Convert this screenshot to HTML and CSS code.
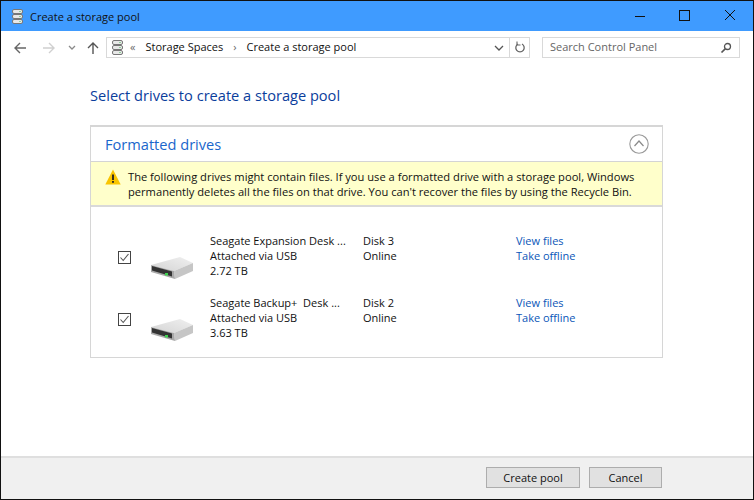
FILE: index.html
```html
<!DOCTYPE html>
<html>
<head>
    <title>Create a storage pool</title>
    <link rel="stylesheet" href="styles.css">
</head>
<body>
    <svg class="defs" width="0" height="0">
        <symbol id="pool" viewBox="0 0 11 15">
            <rect x="0.5" y="0.5" width="10" height="4" rx="1.5" fill="#e8e8e8" stroke="#777"/>
            <rect x="0.5" y="5.5" width="10" height="4" rx="1.5" fill="#e8e8e8" stroke="#777"/>
            <rect x="0.5" y="10.5" width="10" height="4" rx="1.5" fill="#e8e8e8" stroke="#777"/>
            <rect x="7" y="2" width="2" height="1" fill="#8fd49a"/>
            <rect x="7" y="7" width="2" height="1" fill="#8fd49a"/>
            <rect x="7" y="12" width="2" height="1" fill="#8fd49a"/>
        </symbol>
        <symbol id="drive" viewBox="0 0 44 24">
            <defs>
                <linearGradient id="driveTop" x1="0" y1="1" x2="1" y2="0">
                    <stop offset="0" stop-color="#d4d4d4"/>
                    <stop offset="1" stop-color="#f0f0f0"/>
                </linearGradient>
            </defs>
            <path d="M1 9 L30 1 L43 7 L24 15 Z" fill="url(#driveTop)"/>
            <path d="M24 15 L43 7 V15 L25 23 Z" fill="#c6c6c6"/>
            <path d="M1 9 L24 15 L25 23 L1 16 Z" fill="#a8a8a8"/>
            <path d="M2 10 L22 15.5 V20.5 L2 14.5 Z" fill="#333"/>
            <rect x="15" y="17" width="3" height="2.5" fill="#3ed24f"/>
        </symbol>
        <symbol id="check" viewBox="0 0 13 13">
            <rect x="0.5" y="0.5" width="12" height="12" fill="#fff" stroke="#444"/>
            <path d="M2.5 6.5 L5.2 9.5 L10.5 3" fill="none" stroke="#555" stroke-width="1.1"/>
        </symbol>
    </svg>
    <div class="window">
        <div class="titlebar">
            <svg class="title-icon"><use href="#pool"/></svg>
            <span class="title-text">Create a storage pool</span>
            <div class="caption">
                <svg class="cap-btn" viewBox="0 0 46 16"><path d="M20 8.5 H30" stroke="#111" stroke-width="1"/></svg>
                <svg class="cap-btn" viewBox="0 0 46 16"><rect x="18.5" y="2.5" width="10" height="10" fill="none" stroke="#111"/></svg>
                <svg class="cap-btn" viewBox="0 0 46 16"><path d="M18 2 L28 12 M28 2 L18 12" stroke="#111" stroke-width="1"/></svg>
            </div>
        </div>
        <div class="toolbar">
            <svg class="nav nav-back" viewBox="0 0 14 14"><path d="M13 7 H2 M7 2 L2 7 L7 12" fill="none" stroke="#666" stroke-width="1.4"/></svg>
            <svg class="nav nav-fwd" viewBox="0 0 14 14"><path d="M1 7 H12 M7 2 L12 7 L7 12" fill="none" stroke="#d0d0d0" stroke-width="1.4"/></svg>
            <svg class="nav-drop" viewBox="0 0 8 6"><path d="M1 1 L4 4 L7 1" fill="none" stroke="#8a8a8a" stroke-width="1.3"/></svg>
            <svg class="nav nav-up" viewBox="0 0 14 14"><path d="M7 13 V2 M2 7 L7 2 L12 7" fill="none" stroke="#555" stroke-width="1.4"/></svg>
            <div class="address">
                <svg class="addr-icon"><use href="#pool"/></svg>
                <span class="crumb-sep first">«</span>
                <span class="crumb">Storage Spaces</span>
                <span class="crumb-sep">›</span>
                <span class="crumb">Create a storage pool</span>
                <svg class="addr-drop" viewBox="0 0 10 6"><path d="M1 1 L5 5 L9 1" fill="none" stroke="#555" stroke-width="1.3"/></svg>
                <div class="refresh">
                    <svg viewBox="0 0 12 13" width="12" height="13"><path d="M4 3 A4.2 4.2 0 1 0 8 3" fill="none" stroke="#666" stroke-width="1.3"/><path d="M3 0.5 V4 H6.5" fill="none" stroke="#666" stroke-width="1.1"/></svg>
                </div>
            </div>
            <div class="search">
                <span class="crumb">Search Control Panel</span>
                <svg viewBox="0 0 12 12" width="12" height="12"><circle cx="7.5" cy="4.5" r="3" fill="none" stroke="#555" stroke-width="1.3"/><path d="M5.2 6.8 L1.5 10.5" stroke="#555" stroke-width="1.7"/></svg>
            </div>
        </div>
        <main class="content">
            <h1 class="heading">Select drives to create a storage pool</h1>
            <section class="panel">
                <div class="panel-head">
                    <h2>Formatted drives</h2>
                    <svg class="collapse" viewBox="0 0 20 20"><circle cx="10" cy="10" r="9.2" fill="none" stroke="#9a9a9a" stroke-width="1.1"/><path d="M5.5 12 L10 7 L14.5 12" fill="none" stroke="#8a8a8a" stroke-width="1.2"/></svg>
                </div>
                <div class="warning">
                    <svg class="warn-icon" viewBox="0 0 16 16"><path d="M8 0.5 L15.7 15.5 H0.3 Z" fill="#f9c400"/><rect x="7.1" y="5.5" width="1.8" height="5.5" fill="#222"/><rect x="7.1" y="12" width="1.8" height="1.8" fill="#222"/></svg>
                    <p>The following drives might contain files. If you use a formatted drive with a storage pool, Windows permanently deletes all the files on that drive. You can't recover the files by using the Recycle Bin.</p>
                </div>
                <div class="drives">
                    <div class="drive">
                        <svg class="check"><use href="#check"/></svg>
                        <svg class="drive-icon"><use href="#drive"/></svg>
                        <div class="drive-info">Seagate Expansion Desk ...<br>Attached via USB<br>2.72 TB</div>
                        <div class="drive-disk">Disk 3<br>Online</div>
                        <div class="drive-links"><a href="#">View files</a><a href="#">Take offline</a></div>
                    </div>
                    <div class="drive">
                        <svg class="check"><use href="#check"/></svg>
                        <svg class="drive-icon"><use href="#drive"/></svg>
                        <div class="drive-info">Seagate Backup+&nbsp; Desk ...<br>Attached via USB<br>3.63 TB</div>
                        <div class="drive-disk">Disk 2<br>Online</div>
                        <div class="drive-links"><a href="#">View files</a><a href="#">Take offline</a></div>
                    </div>
                </div>
            </section>
        </main>
        <footer class="footer">
            <button class="btn btn-create">Create pool</button>
            <button class="btn btn-cancel">Cancel</button>
        </footer>
    </div>
</body>
</html>
```

FILE: styles.css
```css
* {
    box-sizing: border-box;
}
html, body {
    margin: 0;
    padding: 0;
}
body {
    width: 754px;
    height: 500px;
    overflow: hidden;
    font-family: "Open Sans", "Noto Sans", sans-serif;
    font-size: 11px;
    color: #111;
    background-color: #fff;
}
.defs {
    position: absolute;
}
.window {
    width: 754px;
    height: 500px;
    border: 1px solid #111;
    display: flex;
    flex-direction: column;
}
.titlebar {
    height: 30px;
    background-color: #3f9bff;
    display: flex;
    align-items: center;
    padding-left: 11px;
    flex: none;
}
.title-icon {
    width: 11px;
    height: 15px;
}
.title-text {
    margin-left: 7px;
    color: #111;
}
.caption {
    margin-left: auto;
    display: flex;
}
.cap-btn {
    width: 46px;
    height: 16px;
}
.toolbar {
    height: 35px;
    display: flex;
    align-items: center;
    flex: none;
    padding: 0 0 2px 12px;
}
.nav {
    width: 14px;
    height: 14px;
}
.nav-fwd {
    margin-left: 15px;
}
.nav-drop {
    width: 8px;
    height: 6px;
    margin-left: 12px;
}
.nav-up {
    margin-left: 10px;
}
.address {
    width: 424px;
    height: 21px;
    margin-left: 6px;
    border: 1px solid #d9d9d9;
    display: flex;
    align-items: center;
    padding-left: 5px;
}
.crumb {
    margin-bottom: 2px;
}
.addr-icon {
    width: 11px;
    height: 15px;
}
.crumb-sep {
    margin: 0 10px 2px;
    color: #666;
}
.crumb-sep.first {
    margin: 0 10px 2px 7px;
}
.addr-drop {
    width: 10px;
    height: 6px;
    margin-left: auto;
}
.refresh {
    width: 20px;
    height: 19px;
    margin-left: 5px;
    border-left: 1px solid #d9d9d9;
    display: flex;
    align-items: center;
    justify-content: center;
}
.search {
    width: 198px;
    height: 21px;
    margin-left: 12px;
    border: 1px solid #d9d9d9;
    display: flex;
    align-items: center;
    justify-content: space-between;
    padding: 0 7px;
    color: #666;
}
.content {
    flex: 1;
    padding: 18px 90px 0 89px;
}
.heading {
    margin: 0;
    font-size: 14.6px;
    line-height: 22px;
    font-weight: normal;
    color: #0a3d9c;
}
.panel {
    margin-top: 19px;
    height: 233px;
    border: 1px solid #d6d6d6;
    border-top-width: 2px;
}
.panel-head {
    height: 34px;
    display: flex;
    align-items: center;
    justify-content: space-between;
    padding: 0 13px 0 14px;
}
.panel-head h2 {
    margin: 0;
    font-size: 14.6px;
    font-weight: normal;
    color: #1a66cc;
}
.collapse {
    width: 20px;
    height: 20px;
}
.warning {
    height: 46px;
    background-color: #ffffcb;
    border-top: 1px solid #d4d4d4;
    border-bottom: 2px solid #d9d9d9;
    display: flex;
    align-items: center;
    padding: 1px 0 0 14px;
}
.warn-icon {
    width: 16px;
    height: 16px;
    flex: none;
    align-self: flex-start;
    margin-top: 6px;
}
.warning p {
    margin: 0 0 0 7px;
    width: 520px;
    font-size: 11.15px;
    line-height: 15px;
}
.drives {
    padding-top: 26px;
    display: flex;
    flex-direction: column;
    gap: 17px;
}
.drive {
    height: 45px;
    display: flex;
    line-height: 15px;
}
.check {
    width: 13px;
    height: 13px;
    margin: 18px 0 0 27px;
    flex: none;
}
.drive-icon {
    width: 44px;
    height: 24px;
    margin: 23px 0 0 19px;
    flex: none;
}
.drive-info {
    width: 153px;
    margin-left: 16px;
    white-space: nowrap;
}
.drive-disk {
    width: 153px;
}
.drive-links {
    display: flex;
    flex-direction: column;
}
.drive-links a {
    color: #0a56b8;
    text-decoration: none;
}
.footer {
    height: 43px;
    flex: none;
    background-color: #f0f0f0;
    border-top: 2px solid #dfdfdf;
    display: flex;
    align-items: center;
    justify-content: flex-end;
    gap: 9px;
    padding: 0 91px 2px 0;
}
.btn {
    height: 21px;
    padding: 0;
    font-family: inherit;
    font-size: 11px;
    color: #111;
    background-color: #e1e1e1;
    border: 1px solid #adadad;
}
.btn-create {
    width: 94px;
}
.btn-cancel {
    width: 73px;
}
```
